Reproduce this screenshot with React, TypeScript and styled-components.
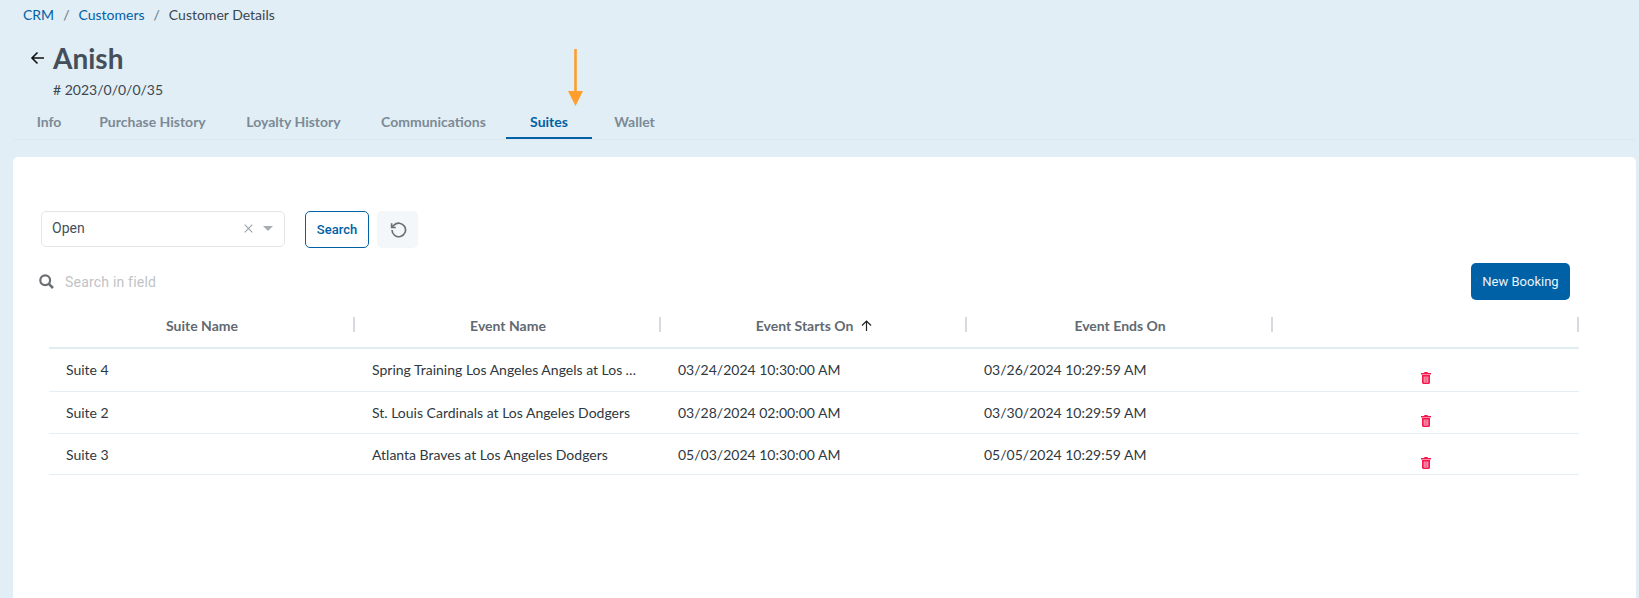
import React from "react";
import styled, { createGlobalStyle } from "styled-components";

const Global = createGlobalStyle`
  html, body { margin: 0; padding: 0; height: 100%; overflow: hidden; }
  #root { height: 100%; }
  * { box-sizing: border-box; }
`;

const Page = styled.div`
  height: 598px;
  background: #e1eef5;
  font-family: Lato, "Liberation Sans", sans-serif;
  padding: 5px 3px 0 13px;
  display: flex;
  flex-direction: column;
  overflow: hidden;
`;
const Breadcrumb = styled.nav`
  display: flex;
  align-items: center;
  height: 19px;
  padding-left: 10px;
  font-size: 14px;
  color: #454f5b;
`;
const Crumb = styled.span<{ $link?: boolean }>`
  color: ${(p) => (p.$link ? "#0061a6" : "#3c4650")};
`;
const Slash = styled.span`
  color: #637381;
  margin: 0 9px;
`;
const TitleRow = styled.div`
  display: flex;
  align-items: center;
  margin-top: 15px;
  padding-left: 17px;
  height: 38px;
`;
const BackButton = styled.span`
  display: flex;
  width: 23px;
  color: #111;
`;
const Title = styled.h1`
  margin: 0;
  font-size: 28px;
  font-weight: 700;
  color: #454f5b;
`;
const CodeLine = styled.div`
  margin-top: 2px;
  padding-left: 40px;
  font-size: 14px;
  line-height: 22px;
  color: #3c4650;
`;
const TabBar = styled.div`
  display: flex;
  height: 39px;
  margin-top: 0;
  margin-left: 1px;
  border-bottom: 1px solid #dfe7ee;
  padding-left: 5px;
`;
const Tab = styled.div<{ $active?: boolean; $w: number }>`
  position: relative;
  width: ${(p) => p.$w}px;
  display: flex;
  align-items: flex-start;
  justify-content: center;
  padding-top: 12px;
  font-size: 14px;
  font-weight: 700;
  color: ${(p) => (p.$active ? "#0061a6" : "#7c8a96")};
  border-bottom: ${(p) => (p.$active ? "2px solid #0061a6" : "none")};
  height: ${(p) => (p.$active ? "38px" : "auto")};
`;
const PointerArrow = styled.svg`
  position: absolute;
  left: 568px;
  top: 49px;
`;
const Card = styled.main`
  flex: 1;
  margin-top: 17px;
  background: #fff;
  border-radius: 5px 5px 0 0;
  padding: 54px 0 0 28px;
`;
const FilterRow = styled.div`
  display: flex;
  align-items: stretch;
  height: 37px;
`;
const Select = styled.div`
  width: 244px;
  height: 36px;
  border: 1px solid #e3e7ea;
  border-radius: 5px;
  padding: 0 11px 2px 10px;
  display: flex;
  align-items: center;
  font-family: Roboto, sans-serif;
  font-size: 14px;
  color: #454f5b;
`;
const SelectValue = styled.span`
  flex: 1;
`;
const ClearMark = styled.span`
  display: flex;
  color: #9aa3ab;
  margin-right: 10px;
`;
const Caret = styled.span`
  width: 0;
  height: 0;
  border-left: 5px solid transparent;
  border-right: 5px solid transparent;
  border-top: 5px solid #a8adb2;
`;
const SearchButton = styled.button`
  margin-left: 20px;
  width: 64px;
  border: 1px solid #0061a6;
  border-radius: 5px;
  background: #fff;
  padding: 0;
  font-family: Roboto, sans-serif;
  font-size: 13px;
  font-weight: 500;
  color: #0061a6;
`;
const ResetButton = styled.button`
  margin-left: 8px;
  width: 41px;
  border: 0;
  border-radius: 5px;
  background: #f4f7fa;
  color: #6b6f73;
  padding: 0;
  display: flex;
  align-items: center;
  justify-content: center;
`;
const ToolRow = styled.div`
  display: flex;
  align-items: center;
  justify-content: space-between;
  margin-top: 15px;
  height: 37px;
  padding-right: 66px;
`;
const FieldSearch = styled.div`
  display: flex;
  align-items: center;
  margin-left: -2px;
  gap: 11px;
  color: #6b6f73;
`;
const Placeholder = styled.span`
  font-family: Roboto, sans-serif;
  font-size: 14px;
  letter-spacing: 0.2px;
  color: #bfc3c7;
`;
const PrimaryButton = styled.button`
  width: 99px;
  height: 37px;
  border: 0;
  border-radius: 5px;
  background: #0061a6;
  color: #e8f4fb;
  padding: 0;
  font-family: Roboto, sans-serif;
  font-size: 13px;
`;
const Table = styled.div`
  width: 1530px;
  margin-left: 8px;
  margin-top: 11px;
`;
const Row = styled.div<{ $head?: boolean; $h: number }>`
  display: grid;
  grid-template-columns: repeat(5, 306px);
  height: ${(p) => p.$h}px;
  border-bottom: ${(p) => (p.$head ? "2px solid #e1edf3" : "1px solid #e3eff5")};
`;
const HeadCell = styled.div`
  position: relative;
  display: flex;
  align-items: flex-start;
  justify-content: center;
  gap: 8px;
  padding-top: 6px;
  font-size: 14px;
  font-weight: 700;
  color: #616a72;
  height: 100%;
  &::after {
    content: "";
    position: absolute;
    right: 0;
    top: 6px;
    width: 2px;
    height: 15px;
    background: #d6dade;
  }
`;
const Cell = styled.div`
  padding: 10px 16px 0 17px;
  font-size: 14px;
  line-height: 22px;
  color: #2f3841;
  white-space: nowrap;
  overflow: hidden;
  text-overflow: ellipsis;
`;
const ActionCell = styled.div`
  display: flex;
  justify-content: center;
  padding-top: 23px;
`;

const rows = [
  ["Suite 4", "Spring Training Los Angeles Angels at Los Angeles Dodgers", "03/24/2024 10:30:00 AM", "03/26/2024 10:29:59 AM", 43],
  ["Suite 2", "St. Louis Cardinals at Los Angeles Dodgers", "03/28/2024 02:00:00 AM", "03/30/2024 10:29:59 AM", 42],
  ["Suite 3", "Atlanta Braves at Los Angeles Dodgers", "05/03/2024 10:30:00 AM", "05/05/2024 10:29:59 AM", 41],
] as const;

const Trash = () => (
  <svg width="10" height="12" viewBox="0 0 10 12" aria-hidden>
    <path d="M3.5 0h3l.5 1h3v1.4H0V1h3z" fill="#f5184e" />
    <path d="M1 3h8v7.6c0 .8-.6 1.4-1.4 1.4H2.4C1.6 12 1 11.4 1 10.6z" fill="#f5184e" />
    <path d="M2.6 4.4h4.8v5.8c0 .3-.2.5-.5.5H3.1c-.3 0-.5-.2-.5-.5z" fill="#f98aa4" />
    <path d="M4.6 4.4h.8v6.3h-.8z" fill="#f5184e" opacity=".55" />
  </svg>
);

export default function App() {
  return (
    <Page>
      <Global />
      <Breadcrumb>
        <Crumb $link>CRM</Crumb>
        <Slash>/</Slash>
        <Crumb $link>Customers</Crumb>
        <Slash>/</Slash>
        <Crumb>Customer Details</Crumb>
      </Breadcrumb>
      <TitleRow>
        <BackButton>
          <svg width="15" height="14" viewBox="0 0 15 14" fill="none" stroke="currentColor" strokeWidth="1.6">
            <path d="M14 7H2M7.5 1.5 2 7l5.5 5.5" />
          </svg>
        </BackButton>
        <Title>Anish</Title>
      </TitleRow>
      <CodeLine># 2023/0/0/0/35</CodeLine>
      <TabBar>
        <Tab $w={60}>Info</Tab>
        <Tab $w={147}>Purchase History</Tab>
        <Tab $w={135}>Loyalty History</Tab>
        <Tab $w={145}>Communications</Tab>
        <Tab $w={86} $active>Suites</Tab>
        <Tab $w={85}>Wallet</Tab>
      </TabBar>
      <PointerArrow width="16" height="57" viewBox="0 0 16 57">
        <rect x="6.2" y="0" width="2.6" height="43" fill="#ff9e2c" />
        <path d="M0 42h15l-7.5 15z" fill="#ff9e2c" />
      </PointerArrow>
      <Card>
        <FilterRow>
          <Select>
            <SelectValue>Open</SelectValue>
            <ClearMark>
              <svg width="9" height="9" viewBox="0 0 9 9" stroke="currentColor" strokeWidth="1.1">
                <path d="M.7.7l7.6 7.6M8.3.7.7 8.3" />
              </svg>
            </ClearMark>
            <Caret />
          </Select>
          <SearchButton>Search</SearchButton>
          <ResetButton>
            <svg width="18" height="18" viewBox="0 0 24 24" fill="none" stroke="currentColor" strokeWidth="2.2">
              <path d="M4 12a9 9 0 1 0 2.6-6.4L3.5 8.5" />
              <path d="M3.5 3v5.6h5.6" />
            </svg>
          </ResetButton>
        </FilterRow>
        <ToolRow>
          <FieldSearch>
            <svg width="15" height="15" viewBox="0 0 15 15" fill="none" stroke="currentColor" strokeWidth="2.2">
              <circle cx="6.2" cy="6.2" r="4.9" />
              <path d="M9.8 9.8 14 14" strokeWidth="2.6" />
            </svg>
            <Placeholder>Search in field</Placeholder>
          </FieldSearch>
          <PrimaryButton>New Booking</PrimaryButton>
        </ToolRow>
        <Table>
          <Row $head $h={38}>
            <HeadCell>Suite Name</HeadCell>
            <HeadCell>Event Name</HeadCell>
            <HeadCell>
              Event Starts On
              <svg width="11" height="11" viewBox="0 0 11 11" fill="none" stroke="#222" strokeWidth="1.2" style={{ marginTop: 3 }}>
                <path d="M5.5 11V1M1 5.5 5.5 1 10 5.5" />
              </svg>
            </HeadCell>
            <HeadCell>Event Ends On</HeadCell>
            <HeadCell />
          </Row>
          {rows.map((r) => (
            <Row key={r[0]} $h={r[4]}>
              <Cell>{r[0]}</Cell>
              <Cell>{r[1]}</Cell>
              <Cell>{r[2]}</Cell>
              <Cell>{r[3]}</Cell>
              <ActionCell>
                <Trash />
              </ActionCell>
            </Row>
          ))}
        </Table>
      </Card>
    </Page>
  );
}
